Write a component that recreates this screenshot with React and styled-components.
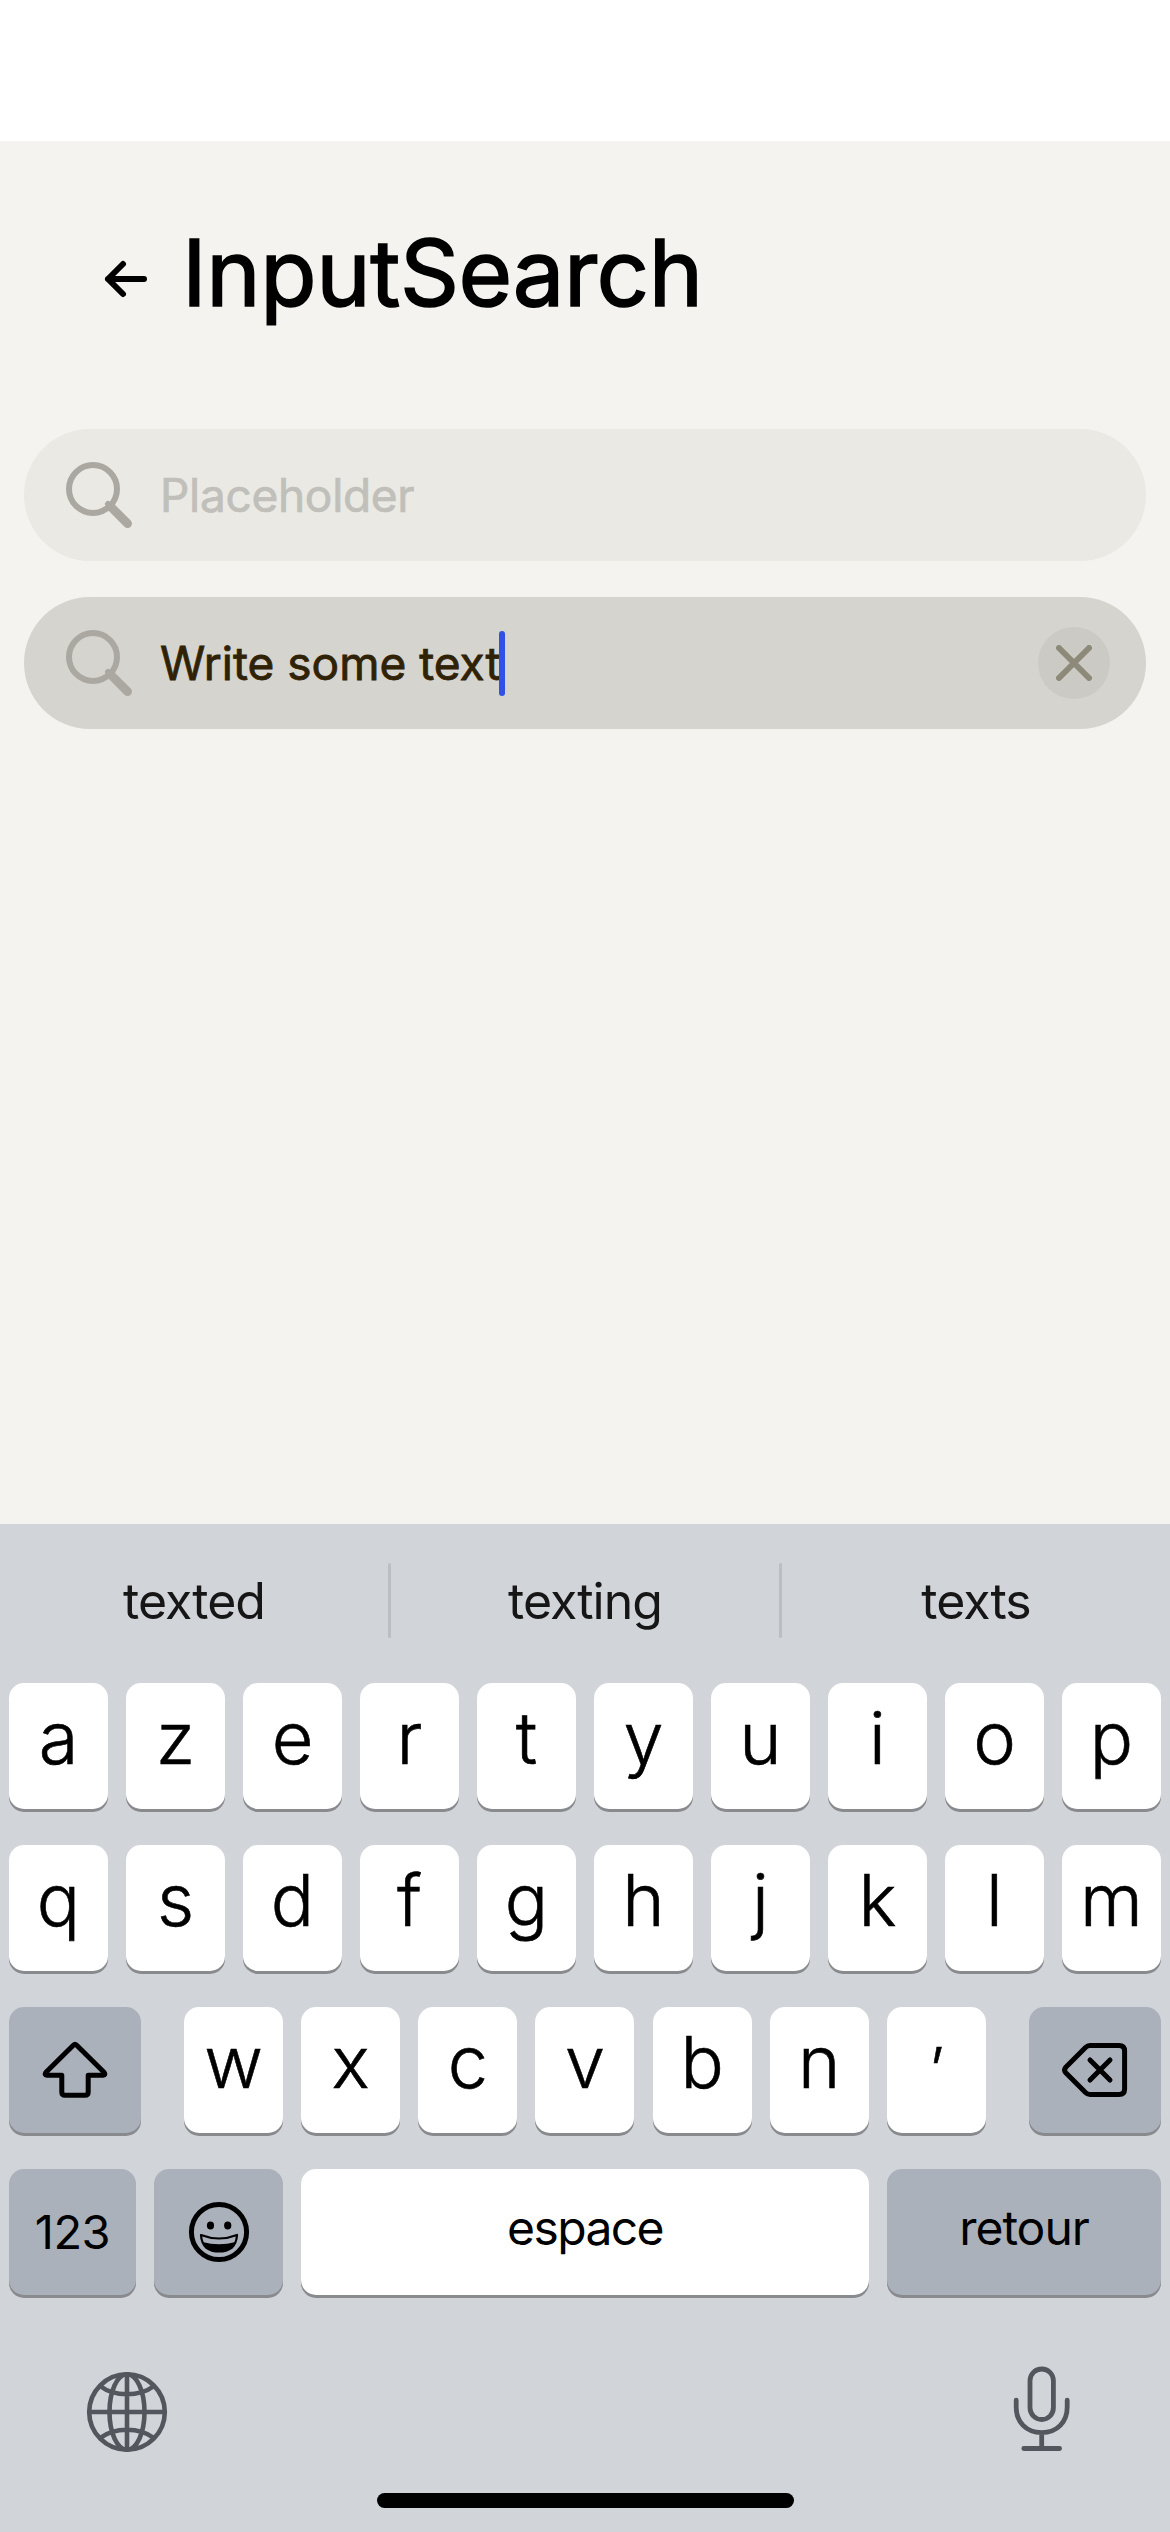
import React from "react";
import styled, { createGlobalStyle } from "styled-components";

const Global = createGlobalStyle`
  * { box-sizing: border-box; }
  body { margin: 0; background: #f4f3ef; }
`;

const Screen = styled.div`
  width: 1170px;
  height: 2532px;
  display: flex;
  flex-direction: column;
  background: #f4f3ef;
  overflow: hidden;
  font-family: Inter, "Liberation Sans", sans-serif;
`;

const StatusBar = styled.div`
  height: 141px;
  flex: none;
  background: #fff;
`;

const Header = styled.header`
  height: 288px;
  flex: none;
  display: flex;
  align-items: flex-start;
  padding: 72px 0 0 102px;
`;

const BackIcon = styled.svg`
  width: 48px;
  height: 48px;
  margin-top: 42px;
`;

const Title = styled.h1`
  margin: 0 0 0 32px;
  font-weight: 400;
  -webkit-text-stroke: 1.6px #000;
  font-size: 92px;
  line-height: 120px;
  letter-spacing: -0.4px;
  color: #000;
  white-space: nowrap;
`;

const Fields = styled.main`
  flex: 1;
  display: flex;
  flex-direction: column;
  gap: 36px;
  padding: 0 24px;
`;

const Field = styled.div`
  height: 132px;
  display: flex;
  align-items: center;
  border-radius: 66px;
  padding: 0 36px 0 36px;
  background: ${(p) => (p.$focused ? "#d5d4ce" : "#eae9e4")};
`;

const SearchIcon = styled.svg`
  width: 78px;
  height: 78px;
  flex: none;
`;

const FieldText = styled.span`
  margin-left: 22px;
  margin-bottom: 1px;
  font-weight: 400;
  -webkit-text-stroke: ${(p) => (p.$muted ? 0.7 : 0.8)}px currentColor;
  font-size: 46px;
  line-height: 60px;
  letter-spacing: ${(p) => p.$tracking}px;
  white-space: nowrap;
  color: ${(p) => (p.$muted ? "#c0bfba" : "#2f2206")};
`;

const Caret = styled.span`
  width: 6px;
  height: 65px;
  margin-left: -2px;
  border-radius: 3px;
  background: #3050e6;
`;

const ClearButton = styled.span`
  width: 72px;
  height: 72px;
  margin-left: auto;
  display: flex;
  align-items: center;
  justify-content: center;
  border-radius: 50%;
  background: #cbcac5;
`;

const Keyboard = styled.section`
  height: 1008px;
  flex: none;
  display: flex;
  flex-direction: column;
  background: #d1d4d9;
`;

const Suggestions = styled.div`
  height: 153px;
  flex: none;
  display: flex;
  align-items: center;
`;

const Suggestion = styled.span`
  flex: 1 1 0;
  text-align: center;
  font-size: 50px;
  line-height: 60px;
  letter-spacing: -1px;
  color: #161616;
`;

const Divider = styled.span`
  width: 3px;
  height: 75px;
  border-radius: 2px;
  background: #bbbec3;
`;

const Keys = styled.div`
  display: flex;
  flex-direction: column;
  gap: 36px;
  padding: 6px 9px 0;
`;

const KeyRow = styled.div`
  display: flex;
  justify-content: space-between;
`;

const LetterGroup = styled.div`
  width: 802px;
  display: flex;
  justify-content: space-between;
`;

const Key = styled.div`
  width: ${(p) => p.$w || 99}px;
  height: 126px;
  display: flex;
  align-items: center;
  justify-content: center;
  padding-bottom: ${(p) => p.$lift || 0}px;
  border-radius: 15px;
  background: ${(p) => (p.$dark ? "#abb1bb" : "#fff")};
  box-shadow: 0 3px 0 #898a8d;
  color: #000;
  font-size: ${(p) => p.$size || 72}px;
  font-weight: ${(p) => p.$weight || 300};
  -webkit-text-stroke: ${(p) => (p.$weight ? 0 : 0.6)}px #000;
  letter-spacing: ${(p) => p.$tracking || 0}px;
  line-height: 90px;
`;

const BottomBar = styled.div`
  flex: 1;
  display: flex;
  justify-content: space-between;
  padding: 69px 84px 0 83px;
`;

const BarIcon = styled.svg`
  width: 88px;
  height: 96px;
`;

const HomeIndicator = styled.div`
  width: 417px;
  height: 15px;
  flex: none;
  align-self: center;
  margin-bottom: 24px;
  border-radius: 8px;
  background: #000;
`;

const Magnifier = () => (
  <SearchIcon viewBox="0 0 78 78" fill="none" stroke="#aba8a1" strokeLinecap="round">
    <circle cx="33" cy="33" r="24" strokeWidth="6" />
    <path d="M51 51 67.6 67.6" strokeWidth="8.8" />
    <path d="M48 48 52 52" strokeWidth="6" />
  </SearchIcon>
);

const letter = (c) =>
  c === "’" ? (
    <Key key={c} $size={62}>
      {c}
    </Key>
  ) : (
    <Key key={c} $lift={16}>
      {c}
    </Key>
  );

export default function App() {
  return (
    <Screen>
      <Global />
      <StatusBar />
      <Header>
        <BackIcon viewBox="0 0 48 48" fill="none" stroke="#000" strokeWidth="6" strokeLinecap="round" strokeLinejoin="round">
          <path d="M21 9 6 24 21 39M6 24H42" />
        </BackIcon>
        <Title>InputSearch</Title>
      </Header>

      <Fields>
        <Field>
          <Magnifier />
          <FieldText $muted $tracking={-0.3}>Placeholder</FieldText>
        </Field>
        <Field $focused>
          <Magnifier />
          <FieldText $tracking={0}>Write some text</FieldText>
          <Caret />
          <ClearButton>
            <svg width="36" height="36" viewBox="0 0 36 36" stroke="#8d8a79" strokeWidth="6" strokeLinecap="round">
              <path d="M3 3 33 33M33 3 3 33" />
            </svg>
          </ClearButton>
        </Field>
      </Fields>

      <Keyboard>
        <Suggestions>
          <Suggestion>texted</Suggestion>
          <Divider />
          <Suggestion>texting</Suggestion>
          <Divider />
          <Suggestion>texts</Suggestion>
        </Suggestions>

        <Keys>
          <KeyRow>{[..."azertyuiop"].map(letter)}</KeyRow>
          <KeyRow>{[..."qsdfghjklm"].map(letter)}</KeyRow>
          <KeyRow>
            <Key $dark $w={132}>
              <svg width="66" height="58" viewBox="0 0 66 58" fill="none" stroke="#000" strokeWidth="5" strokeLinejoin="round">
                <path d="M31.3 4.2Q33 2.6 34.7 4.2L62 31.2Q64 34 61 34.3H46.2V51Q46.2 54.3 43 54.3H23Q19.8 54.3 19.8 51V34.3H5Q2 34 4 31.2Z" />
              </svg>
            </Key>
            <LetterGroup>{[..."wxcvbn’"].map(letter)}</LetterGroup>
            <Key $dark $w={132}>
              <svg width="66" height="54" viewBox="0 0 66 54" fill="none" stroke="#000" strokeWidth="5" strokeLinejoin="round" strokeLinecap="round">
                <path d="M28 2.5H57Q62.6 2.5 62.6 8V46Q62.6 51.5 57 51.5H28Q25.5 51.5 23.5 49.5L4 30Q1.2 27 4 24L23.5 4.5Q25.5 2.5 28 2.5Z" />
                <path d="M28 17 48 37M48 17 28 37" />
              </svg>
            </Key>
          </KeyRow>
          <KeyRow>
            <Key $dark $w={127} $size={47} $weight={400} $tracking={-0.5}>123</Key>
            <Key $dark $w={129}>
              <svg width="62" height="62" viewBox="0 0 62 62" fill="none" stroke="#000">
                <circle cx="31" cy="31" r="27.6" strokeWidth="5" />
                <ellipse cx="22.5" cy="24.4" rx="3.6" ry="4" fill="#000" stroke="none" />
                <ellipse cx="39.7" cy="24.4" rx="3.6" ry="4" fill="#000" stroke="none" />
                <path d="M13 34Q31 41 49 34Q48.500 42 44 46.500Q38.500 50.500 31 50.500Q23.500 50.500 18 46.500Q13.500 42 13 34Z" strokeWidth="2.2" strokeLinejoin="round" />
                <path d="M14.500 41Q31 45.500 47.500 41Q42.500 51 31 51Q19.500 51 14.500 41Z" fill="#000" stroke="none" />
              </svg>
            </Key>
            <Key $w={568} $size={48} $weight={400} $lift={9} $tracking={-1.6}>espace</Key>
            <Key $dark $w={274} $size={48} $weight={400} $lift={9} $tracking={-1}>retour</Key>
          </KeyRow>
        </Keys>

        <BottomBar>
          <BarIcon viewBox="0 0 88 96" fill="none" stroke="#53575d" strokeWidth="4.6">
            <circle cx="44" cy="48" r="37.8" />
            <ellipse cx="44" cy="48" rx="17.5" ry="37.8" />
            <path d="M44 10V86M6 48H82M17 22Q28 30.3 44 30.3T71 22M17 74Q28 65.7 44 65.7T71 74" />
          </BarIcon>
          <BarIcon viewBox="0 0 88 96" fill="none" stroke="#53575d" strokeWidth="4.8" strokeLinecap="round">
            <rect x="32" y="5" width="23.4" height="50.5" rx="11.7" />
            <path d="M18.2 36.2V43C18.2 58 28 68.600 43.7 68.6S69.2 58 69.2 43V36.2M43.7 69V84M25.8 84.5H61.6" />
          </BarIcon>
        </BottomBar>
        <HomeIndicator />
      </Keyboard>
    </Screen>
  );
}
